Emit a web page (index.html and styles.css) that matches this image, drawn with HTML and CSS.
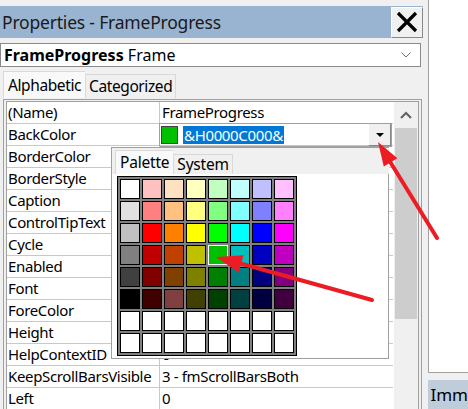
FILE: index.html
```html
<!DOCTYPE html>
<html>
<head>
    <link rel="stylesheet" href="styles.css">
</head>
<body>
    <div class="app">
        <div class="props">
            <div class="titlebar">
                <span class="title">Properties - FrameProgress</span>
                <div class="close-btn">
                    <svg width="22" height="22" viewBox="0 0 22 22">
                        <path d="M2 2 L20 20 M20 2 L2 20" stroke="#000" stroke-width="3.2" fill="none"/>
                    </svg>
                </div>
            </div>
            <div class="combo">
                <span class="combo-text"><b>FrameProgress</b> Frame</span>
                <svg class="chevron" width="10" height="6" viewBox="0 0 10 6">
                    <path d="M0.5 0.5 L5 5 L9.5 0.5" stroke="#707070" stroke-width="1" fill="none"/>
                </svg>
            </div>
            <div class="tabs">
                <div class="tab active">Alphabetic</div>
                <div class="tab">Categorized</div>
            </div>
            <div class="grid-outer">
                <div class="grid-inner">
                    <div class="rows" id="rows"></div>
                    <div class="scrollbar">
                        <div class="sb-up">
                            <svg width="12" height="8" viewBox="0 0 12 8">
                                <path d="M1 7 L6 2 L11 7" stroke="#606060" stroke-width="2" fill="none"/>
                            </svg>
                        </div>
                        <div class="sb-thumb"></div>
                    </div>
                </div>
            </div>
        </div>
        <div class="side">
            <div class="codewin"></div>
            <div class="imm">Imm</div>
        </div>
    </div>

    <div class="popup">
        <div class="popup-tabs">
            <div class="ptab active">Palette</div>
            <div class="ptab">System</div>
        </div>
        <div class="palette-panel">
            <div class="palette" id="palette"></div>
        </div>
    </div>

    <svg class="arrows" width="468" height="409" viewBox="0 0 468 409">
        <line x1="437" y1="238" x2="389" y2="160" stroke="#ec1c24" stroke-width="4" stroke-linecap="round"/>
        <polygon points="378,142 397.4,158.2 383.8,166.6" fill="#ec1c24"/>
        <line x1="372" y1="300" x2="239" y2="263" stroke="#ec1c24" stroke-width="4" stroke-linecap="round"/>
        <polygon points="216,257 243.5,255.2 238.7,272.6" fill="#ec1c24"/>
    </svg>

    <script>
        var props = [
            ["(Name)", "FrameProgress"],
            ["BackColor", ""],
            ["BorderColor", ""],
            ["BorderStyle", ""],
            ["Caption", ""],
            ["ControlTipText", ""],
            ["Cycle", ""],
            ["Enabled", ""],
            ["Font", ""],
            ["ForeColor", ""],
            ["Height", ""],
            ["HelpContextID", "0"],
            ["KeepScrollBarsVisible", "3 - fmScrollBarsBoth"],
            ["Left", "0"]
        ];
        var rows = document.getElementById("rows");
        for (var i = 0; i < props.length; i++)
        {
            var row = document.createElement("div");
            row.className = "row";
            var name = "<div class='name'>" + props[i][0] + "</div>";
            var value;
            if (props[i][0] == "BackColor")
            {
                value = "<div class='value edit'><span class='swatch'></span>" +
                        "<span class='selected'>&amp;H0000C000&amp;</span>" +
                        "<span class='drop-btn'><span class='tri'></span></span></div>";
            }
            else
            {
                value = "<div class='value'>" + props[i][1] + "</div>";
            }
            row.innerHTML = name + value;
            rows.appendChild(row);
        }

        var colors = [
            "#ffffff","#ffc0c0","#ffe0c0","#ffffc0","#c0ffc0","#c0ffff","#c0c0ff","#ffc0ff",
            "#e0e0e0","#ff8080","#ffc080","#ffff80","#80ff80","#80ffff","#8080ff","#ff80ff",
            "#c0c0c0","#ff0000","#ff8000","#ffff00","#00ff00","#00ffff","#0000ff","#ff00ff",
            "#808080","#c00000","#c04000","#c0c000","#00c000","#00c0c0","#0000c0","#c000c0",
            "#404040","#800000","#804000","#808000","#008000","#008080","#000080","#800080",
            "#000000","#400000","#804040","#404000","#004000","#004040","#000040","#400040"
        ];
        var palette = document.getElementById("palette");
        for (var j = 0; j < 64; j++)
        {
            var cell = document.createElement("div");
            cell.className = j == 28 ? "cell picked" : "cell";
            cell.style.background = j < colors.length ? colors[j] : "#ffffff";
            palette.appendChild(cell);
        }
    </script>
</body>
</html>
```

FILE: styles.css
```css
body
{
    margin: 0;
    background-color: #f0f0f0;
    font-family: "Noto Sans", sans-serif;
    color: #000;
    overflow: hidden;
}
.app
{
    display: flex;
    width: 468px;
    height: 409px;
}
.props
{
    width: 429px;
    padding-top: 6px;
}
.titlebar
{
    width: 423px;
    height: 32px;
    background-color: #99b4d1;
    display: flex;
    align-items: center;
    justify-content: space-between;
}
.title
{
    padding-left: 2px;
    font-size: 17.5px;
    letter-spacing: -0.2px;
    color: #1a1a1a;
}
.close-btn
{
    width: 30px;
    height: 29px;
    background-color: #f0f0f0;
    border-top: 1px solid #fff;
    border-left: 1px solid #fff;
    border-right: 1px solid #888;
    border-bottom: 1px solid #888;
    display: flex;
    align-items: center;
    justify-content: center;
}
.combo
{
    margin-top: 5px;
    width: 419px;
    height: 22px;
    background-color: #fff;
    border: 1px solid #8a8a8a;
    display: flex;
    align-items: center;
    justify-content: space-between;
}
.combo-text
{
    padding-left: 3px;
    font-size: 16px;
}
.chevron
{
    margin-right: 9px;
}
.tabs
{
    margin-top: 4px;
    height: 27px;
    display: flex;
    align-items: flex-end;
    padding-left: 3px;
}
.tab
{
    height: 23px;
    padding: 0 3px;
    font-size: 15.5px;
    letter-spacing: -0.4px;
    line-height: 23px;
    border: 1px solid #d9d9d9;
    border-bottom: none;
    background-color: #f0f0f0;
}
.tab.active
{
    height: 26px;
    line-height: 26px;
    padding: 0 4px;
    background-color: #f9f9f9;
    border-right: none;
}
.grid-outer
{
    margin-top: 1px;
    margin-left: 3px;
    width: 413px;
    height: 308px;
    border: 1px solid #a0a0a0;
    border-bottom: none;
    padding: 1px 2px 0 2px;
}
.grid-inner
{
    height: 100%;
    border: 1px solid #a0a0a0;
    border-bottom: none;
    display: flex;
    background-color: #fff;
}
.rows
{
    flex: 1;
}
.row
{
    display: flex;
    height: 21px;
    border-bottom: 1px solid #c8c8c8;
    font-size: 15px;
    letter-spacing: -0.35px;
    line-height: 21px;
}
.name
{
    width: 151px;
    padding-left: 1px;
    border-right: 1px solid #c8c8c8;
    white-space: nowrap;
    overflow: hidden;
}
.value
{
    flex: 1;
    padding-left: 2px;
    white-space: nowrap;
    overflow: hidden;
}
.value.edit
{
    display: flex;
    align-items: center;
    margin-top: -1px;
    height: 22px;
    border: 1px solid #a0a0a0;
    margin-left: -1px;
    margin-right: 1px;
    padding-left: 1px;
}
.swatch
{
    width: 15px;
    height: 16px;
    background-color: #00c000;
    border: 1px solid #404040;
}
.selected
{
    margin-left: 5px;
    padding: 0 1px;
    background-color: #0078d7;
    color: #fff;
    line-height: 18px;
}
.drop-btn
{
    margin-left: auto;
    width: 21px;
    height: 21px;
    background-color: #f0f0f0;
    border-left: 1px solid #fff;
    border-right: 1px solid #888;
    border-bottom: 1px solid #888;
    display: flex;
    align-items: center;
    justify-content: center;
}
.tri
{
    width: 0;
    height: 0;
    border-left: 4px solid transparent;
    border-right: 4px solid transparent;
    border-top: 4px solid #000;
}
.scrollbar
{
    width: 24px;
    margin-left: 1px;
    background-color: #f0f0f0;
}
.sb-up
{
    height: 26px;
    display: flex;
    align-items: center;
    justify-content: center;
}
.sb-thumb
{
    margin: 0 1px;
    height: 191px;
    background-color: #cdcdcd;
}
.side
{
    flex: 1;
    display: flex;
    flex-direction: column;
}
.codewin
{
    height: 372px;
    background-color: #fff;
    border-left: 1px solid #a0a0a0;
    border-bottom: 1px solid #a0a0a0;
}
.imm
{
    margin-top: 7px;
    flex: 1;
    background-color: #bfcddb;
    font-size: 17px;
    padding-left: 2px;
    line-height: 29px;
    overflow: hidden;
}
.popup
{
    position: absolute;
    left: 111px;
    top: 147px;
    width: 277px;
    background-color: #f0f0f0;
    border: 1px solid #a0a0a0;
    border-right: none;
    border-bottom: none;
}
.popup-tabs
{
    height: 24px;
    margin-top: 2px;
    padding-left: 3px;
    display: flex;
    align-items: flex-end;
}
.ptab
{
    height: 19px;
    padding: 0 3px;
    font-size: 15.5px;
    letter-spacing: -0.2px;
    line-height: 19px;
    border: 1px solid #d9d9d9;
    border-bottom: none;
    background-color: #f0f0f0;
}
.ptab.active
{
    height: 23px;
    line-height: 23px;
    padding: 0 4px;
    background-color: #f9f9f9;
    border-right: none;
}
.palette-panel
{
    height: 182px;
    background-color: #fff;
    border-right: 1px solid #a0a0a0;
    border-bottom: 1px solid #a0a0a0;
    padding: 2px 0 0 5px;
}
.palette
{
    width: 174px;
    display: grid;
    grid-template-columns: repeat(8, 20px);
    grid-auto-rows: 20px;
    gap: 2px;
    padding: 2px;
    background-color: #808080;
    border: 1px solid #000;
}
.cell
{
    border: 1px solid #000;
}
.cell.picked
{
    border-color: #fff;
}
.arrows
{
    position: absolute;
    left: 0;
    top: 0;
    pointer-events: none;
}
```
